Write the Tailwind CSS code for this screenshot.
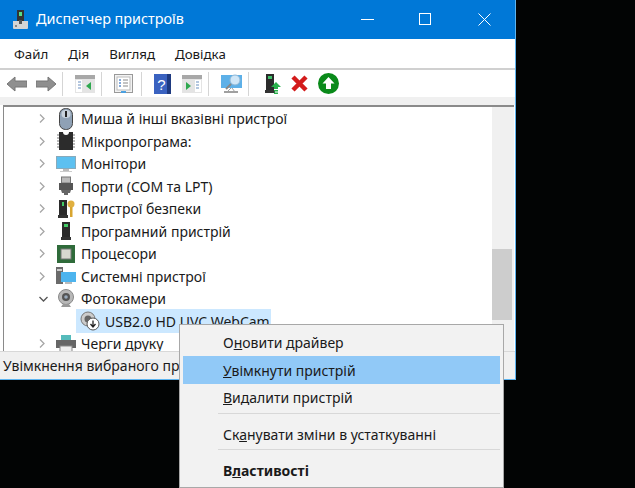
<!DOCTYPE html>
<html lang="uk">
<head>
<meta charset="utf-8">
<script src="https://cdn.jsdelivr.net/npm/@tailwindcss/browser@4"></script>
<title>Диспетчер пристроїв</title>
</head>
<body class="m-0 bg-[#020404] overflow-hidden">
<div class="relative w-[635px] h-[488px] bg-[#020404] font-['Noto_Sans',sans-serif] text-[14px] text-[#1a1a1a] overflow-hidden">
  <!-- Window -->
  <div class="flex flex-col w-[516px] h-[380px] border-r border-b border-[#5db4f0] bg-white overflow-hidden">
    <!-- Title bar -->
    <div class="flex items-center h-[39px] shrink-0 bg-[#0078d7] text-white">
      <svg class="ml-[12px] w-[17px] h-[22px]" viewBox="0 0 17 22"><rect x="5" y="1" width="7" height="11" fill="#333"/><rect x="7" y="3" width="3" height="4" fill="#5d8"/><path d="M1 12h15v7a1 1 0 0 1-1 1H2a1 1 0 0 1-1-1z" fill="#d5d5d5"/><rect x="7" y="11" width="3" height="4" fill="#555"/><rect x="3" y="16" width="2" height="2" fill="#888"/></svg>
      <span class="ml-[7px] text-[14.4px] leading-none">Диспетчер пристроїв</span>
      <div class="ml-auto flex items-center">
        <svg class="w-[13px] h-[13px] mr-[45px]" viewBox="0 0 13 13"><path d="M0 6.500h13" stroke="#fff"/></svg>
        <svg class="w-[13px] h-[13px] mr-[46px]" viewBox="0 0 13 13"><rect x=".5" y=".5" width="11" height="11" fill="none" stroke="#fff"/></svg>
        <svg class="w-[13px] h-[13px] mr-[24px]" viewBox="0 0 13 13"><path d="M.5.5l12 12M12.500.5l-12 12" stroke="#fff"/></svg>
      </div>
    </div>
    <!-- Menu bar -->
    <div class="flex items-center h-[27px] shrink-0 pl-[14px] pt-[2px] gap-[20px] text-[13.3px] border-b-2 border-[#d0d0d0] box-content">
      <span>Файл</span><span>Дія</span><span>Вигляд</span><span>Довідка</span>
    </div>
    <!-- Toolbar -->
    <div class="flex items-center h-[27px] shrink-0">
      <svg class="ml-[7px] w-[20px] h-[16px]" viewBox="0 0 20 16"><path d="M0 8l8-7v4h12v6H8v4z" fill="#8f8f8f" stroke="#777"/></svg>
      <svg class="ml-[9px] w-[20px] h-[16px]" viewBox="0 0 20 16"><path d="M20 8l-8-7v4H0v6h12v4z" fill="#8f8f8f" stroke="#777"/></svg>
      <div class="ml-[6px] w-px h-[24px] bg-[#d5d5d5]"></div>
      <svg class="ml-[12px] w-[20px] h-[18px]" viewBox="0 0 20 18"><rect width="20" height="18" fill="#e4e4e4"/><rect width="20" height="4" fill="#a8a8a8"/><rect x="1" y="5" width="6" height="12" fill="#fff"/><path d="M3 7h3M3 10h3M3 13h3" stroke="#6a8fc0"/><path d="M16 7v8l-5-4z" fill="#2fa84f"/></svg>
      <div class="ml-[6px] w-px h-[24px] bg-[#d5d5d5]"></div>
      <svg class="ml-[12px] w-[19px] h-[20px]" viewBox="0 0 19 20"><rect x=".5" y=".5" width="18" height="18" fill="#f2f2f2" stroke="#999"/><rect x="3" y="3" width="13" height="13" fill="#fff" stroke="#bbb"/><path d="M5 6h2M5 9h2M5 12h2" stroke="#5b8ed0" stroke-width="1.500"/><path d="M9 6h5M9 9h5M9 12h5" stroke="#888"/><rect x="7" y="17" width="5" height="2" fill="#4aa0e0"/></svg>
      <div class="ml-[8px] w-px h-[24px] bg-[#d5d5d5]"></div>
      <svg class="ml-[12px] w-[17px] h-[20px]" viewBox="0 0 17 20"><rect width="17" height="20" fill="#3a62c0"/><rect x="13" width="4" height="20" fill="#1e3a80"/><text x="7.500" y="16" font-size="15" font-family="Liberation Sans" fill="#fff" text-anchor="middle">?</text></svg>
      <svg class="ml-[11px] w-[20px] h-[18px]" viewBox="0 0 20 18"><rect width="20" height="18" fill="#e4e4e4"/><rect width="20" height="4" fill="#a8a8a8"/><rect x="13" y="5" width="6" height="12" fill="#fff"/><path d="M14 7h3M14 10h3M14 13h3" stroke="#6a8fc0"/><path d="M4 7v8l5-4z" fill="#2fa84f"/></svg>
      <div class="ml-[6px] w-px h-[24px] bg-[#d5d5d5]"></div>
      <svg class="ml-[12px] w-[21px] h-[20px]" viewBox="0 0 21 20"><rect y="1" width="21" height="13" fill="#5db0e8"/><path d="M3 18h14" stroke="#a0a0a0" stroke-width="2"/><path d="M10 14l-4 4M11 14l3 4" stroke="#a0a0a0"/><circle cx="14" cy="6" r="5" fill="#cfe6f7" stroke="#8fb8d8"/><path d="M10 10l-5 5" stroke="#888" stroke-width="2"/></svg>
      <div class="ml-[6px] w-px h-[24px] bg-[#d5d5d5]"></div>
      <svg class="ml-[16px] w-[16px] h-[20px]" viewBox="0 0 16 20"><rect x="1" width="8" height="16" fill="#2b2b2b"/><rect x="3" y="2" width="4" height="3" fill="#3fc06a"/><rect y="16" width="10" height="3" fill="#333"/><path d="M11 8l5 5h-3v2H9v-2H6z" fill="#28b04b"/><rect x="9" y="16" width="4" height="1.500" fill="#28b04b"/><rect x="9" y="18.500" width="4" height="1.500" fill="#28b04b"/></svg>
      <svg class="ml-[10px] w-[17px] h-[17px]" viewBox="0 0 17 17"><path d="M2 2l13 13M15 2L2 15" stroke="#d31b1b" stroke-width="4.500"/></svg>
      <svg class="ml-[10px] w-[21px] h-[21px]" viewBox="0 0 21 21"><circle cx="10.500" cy="10.500" r="10.500" fill="#0a8a1a"/><path d="M10.500 4l6 6.500h-3.500V16h-5v-5.500H4.500z" fill="#fff"/></svg>
    </div>
    <div class="h-[8px] shrink-0 bg-[#f0f0f0]"></div>
    <!-- Tree area -->
    <div class="flex flex-1 min-h-0 ml-[3px] mr-px border-t-2 border-l border-[#8a8a8a] overflow-hidden">
      <div class="flex-1 min-w-0">
        <div class="flex items-center h-[22.5px] mt-[0.5px]"><svg class="ml-[35px] w-[6px] h-[9px]" viewBox="0 0 6 9"><path d="M1 .5l4 4-4 4" fill="none" stroke="#a6a6a6" stroke-width="1.300"/></svg>
          <svg class="ml-[11px] w-[20px] h-[22px]" viewBox="0 0 20 22"><rect x="3.500" y=".5" width="13" height="21" rx="6" fill="#8fa1b5" stroke="#444"/><rect x="5.500" y="2" width="9" height="8" rx="4" fill="#c8d2dc"/><rect x="9" y="3" width="2" height="6" fill="#222"/></svg><span class="ml-[5px] whitespace-nowrap">Миша й інші вказівні пристрої</span></div>
        <div class="flex items-center h-[22.5px]"><svg class="ml-[35px] w-[6px] h-[9px]" viewBox="0 0 6 9"><path d="M1 .5l4 4-4 4" fill="none" stroke="#a6a6a6" stroke-width="1.300"/></svg>
          <svg class="ml-[11px] w-[20px] h-[20px]" viewBox="0 0 20 20"><path d="M1 4h18M1 7h18M1 10h18M1 13h18M1 16h18" stroke="#777"/><rect x="3" y="1" width="14" height="18" fill="#2c2c2c"/><path d="M7 1a3 3 0 0 0 6 0z" fill="#fff"/></svg><span class="ml-[5px] whitespace-nowrap">Мікропрограма:</span></div>
        <div class="flex items-center h-[22.5px]"><svg class="ml-[35px] w-[6px] h-[9px]" viewBox="0 0 6 9"><path d="M1 .5l4 4-4 4" fill="none" stroke="#a6a6a6" stroke-width="1.300"/></svg>
          <svg class="ml-[11px] w-[20px] h-[20px]" viewBox="0 0 20 20"><rect x=".5" y="2.500" width="19" height="12" fill="#5cc0f0" stroke="#8ab"/><rect x="7" y="15" width="6" height="2" fill="#bbb"/><rect x="4" y="17" width="12" height="1" fill="#ccc"/></svg><span class="ml-[5px] whitespace-nowrap">Монітори</span></div>
        <div class="flex items-center h-[22.5px]"><svg class="ml-[35px] w-[6px] h-[9px]" viewBox="0 0 6 9"><path d="M1 .5l4 4-4 4" fill="none" stroke="#a6a6a6" stroke-width="1.300"/></svg>
          <svg class="ml-[11px] w-[20px] h-[20px]" viewBox="0 0 20 20"><rect x="5.500" y="1" width="9" height="6" fill="#bbb" stroke="#777"/><rect x="3" y="7" width="14" height="7" fill="#555"/><path d="M5 14h10l-1 3H6z" fill="#666"/><rect x="8" y="17" width="4" height="2" fill="#666"/></svg><span class="ml-[5px] whitespace-nowrap">Порти (COM та LPT)</span></div>
        <div class="flex items-center h-[22.5px]"><svg class="ml-[35px] w-[6px] h-[9px]" viewBox="0 0 6 9"><path d="M1 .5l4 4-4 4" fill="none" stroke="#a6a6a6" stroke-width="1.300"/></svg>
          <svg class="ml-[11px] w-[20px] h-[20px]" viewBox="0 0 20 20"><rect x="3" y="1" width="8" height="15" fill="#2b2b2b"/><rect x="6" y="3" width="2" height="4" fill="#4c6"/><rect x="2" y="16" width="10" height="3" fill="#333"/><circle cx="15" cy="5" r="3.500" fill="#e0b040"/><rect x="14" y="8" width="2.500" height="10" fill="#d8a530"/></svg><span class="ml-[5px] whitespace-nowrap">Пристрої безпеки</span></div>
        <div class="flex items-center h-[22.5px]"><svg class="ml-[35px] w-[6px] h-[9px]" viewBox="0 0 6 9"><path d="M1 .5l4 4-4 4" fill="none" stroke="#a6a6a6" stroke-width="1.300"/></svg>
          <svg class="ml-[11px] w-[20px] h-[20px]" viewBox="0 0 20 20"><rect x="6" y="1" width="8" height="15" fill="#2b2b2b"/><rect x="8" y="3" width="4" height="3" fill="#4c6"/><rect x="5" y="16" width="10" height="3" fill="#333"/></svg><span class="ml-[5px] whitespace-nowrap">Програмний пристрій</span></div>
        <div class="flex items-center h-[22.5px]"><svg class="ml-[35px] w-[6px] h-[9px]" viewBox="0 0 6 9"><path d="M1 .5l4 4-4 4" fill="none" stroke="#a6a6a6" stroke-width="1.300"/></svg>
          <svg class="ml-[11px] w-[20px] h-[20px]" viewBox="0 0 20 20"><rect x="1" y="1" width="18" height="18" fill="#2f6b3a"/><rect x="5" y="5" width="10" height="10" fill="#d8d8d0" stroke="#777"/></svg><span class="ml-[5px] whitespace-nowrap">Процесори</span></div>
        <div class="flex items-center h-[22.5px]"><svg class="ml-[35px] w-[6px] h-[9px]" viewBox="0 0 6 9"><path d="M1 .5l4 4-4 4" fill="none" stroke="#a6a6a6" stroke-width="1.300"/></svg>
          <svg class="ml-[11px] w-[20px] h-[20px]" viewBox="0 0 20 20"><rect y="1" width="7" height="17" fill="#6a6a6a"/><rect x="1" y="3" width="5" height="2" fill="#ccc"/><rect x="5" y="6" width="15" height="10" fill="#4db4ee"/><rect x="9" y="16" width="7" height="2" fill="#bbb"/></svg><span class="ml-[5px] whitespace-nowrap">Системні пристрої</span></div>
        <div class="flex items-center h-[22.5px]"><svg class="ml-[35px] w-[9px] h-[6px]" viewBox="0 0 9 6"><path d="M.5 1l4 4 4-4" fill="none" stroke="#555" stroke-width="1.300"/></svg>
          <svg class="ml-[8px] w-[20px] h-[20px]" viewBox="0 0 20 20"><circle cx="10" cy="8" r="7.500" fill="#b8b8b8" stroke="#888"/><circle cx="10" cy="8" r="4" fill="#555"/><circle cx="10" cy="8" r="1.800" fill="#9ab"/><path d="M5 18h10l-2-3H7z" fill="#999"/></svg><span class="ml-[5px] whitespace-nowrap">Фотокамери</span></div>
        <div class="flex items-center h-[22.5px]">
          <div class="flex items-center ml-[72px] h-[24px] w-[195px] bg-[#cce8ff]">
            <svg class="ml-[4px] w-[20px] h-[20px]" viewBox="0 0 20 20"><circle cx="8" cy="8" r="7" fill="#ccc" stroke="#777"/><circle cx="8" cy="8" r="3.500" fill="#666"/><circle cx="13" cy="13" r="6" fill="#fff" stroke="#555"/><path d="M13 9.500v6M10.500 13l2.500 3 2.500-3" fill="none" stroke="#222" stroke-width="1.300"/></svg>
            <span class="ml-[5px] whitespace-nowrap">USB2.0 HD UVC WebCam</span>
          </div>
        </div>
        <div class="flex items-center h-[22.5px]"><svg class="ml-[35px] w-[6px] h-[9px]" viewBox="0 0 6 9"><path d="M1 .5l4 4-4 4" fill="none" stroke="#a6a6a6" stroke-width="1.300"/></svg>
          <svg class="ml-[11px] w-[20px] h-[20px]" viewBox="0 0 20 20"><rect x="5" y="1" width="10" height="5" fill="#5bb"/><rect y="6" width="20" height="8" fill="#666"/><rect x="4" y="12" width="12" height="7" fill="#eee" stroke="#888"/></svg><span class="ml-[5px] whitespace-nowrap">Черги друку</span></div>
      </div>
      <!-- Scrollbar -->
      <div class="flex flex-col w-[22px] shrink-0 bg-[#f0f0f0]">
        <div class="mt-[142px] w-[20px] h-[71px] bg-[#cdcdcd]"></div>
      </div>
    </div>
    <!-- Status bar -->
    <div class="flex items-center h-[28px] shrink-0 pl-[3px] bg-[#f0f0f0] border-t border-[#d8d8d8]">
      <span class="whitespace-nowrap">Увімкнення вибраного пристрою.</span>
    </div>
  </div>
  <!-- Context menu -->
  <div class="absolute left-[179px] top-[324px] w-[325px] h-[164px] flex flex-col bg-[#f2f2f2] border border-[#a8a8a8] pt-[4px] px-[3px] text-[14px] text-[#1a1a1a]">
    <div class="flex items-center h-[27px] pl-[40px]"><span>О<u>н</u>овити драйвер</span></div>
    <div class="flex items-center h-[28px] pl-[40px] bg-[#91c9f7]"><span><u>У</u>вімкнути пристрій</span></div>
    <div class="flex items-center h-[27px] pl-[40px]"><span><u>В</u>идалити пристрій</span></div>
    <div class="ml-[35px] mt-[2px] h-px bg-[#d8d8d8]"></div>
    <div class="flex items-center h-[35px] pl-[40px] pt-[6px]"><span>Ск<u>а</u>нувати зміни в устаткуванні</span></div>
    <div class="ml-[35px] h-px bg-[#d8d8d8]"></div>
    <div class="flex items-center h-[35px] pl-[40px] pt-[6px] font-bold"><span>В<u>л</u>астивості</span></div>
  </div>
</div>
</body>
</html>
